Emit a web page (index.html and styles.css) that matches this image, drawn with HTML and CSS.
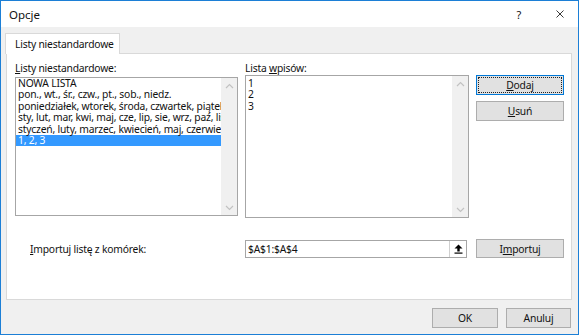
FILE: index.html
```html
<!DOCTYPE html>
<html lang="pl">
<head>
    <meta charset="UTF-8">
    <title>Opcje</title>
    <link rel="stylesheet" href="styles.css">
</head>
<body>
    <div class="window">
        <div class="titlebar">
            <span class="title">Opcje</span>
            <span class="help">?</span>
            <svg class="close" width="8" height="8" viewBox="0 0 8 8">
                <path d="M0.5 0.5 L7.5 7.5 M7.5 0.5 L0.5 7.5" stroke="#222" stroke-width="0.9" fill="none"/>
            </svg>
        </div>

        <div class="content">
            <div class="tabs">
                <div class="tab">Listy niestandardowe</div>
            </div>

            <div class="panel">
                <div class="lists">
                    <div class="col-left">
                        <div class="label"><u>L</u>isty niestandardowe:</div>
                        <div class="listbox listbox-left">
                            <div class="items">
                                <div class="item">NOWA LISTA</div>
                                <div class="item">pon., wt., śr., czw., pt., sob., niedz.</div>
                                <div class="item">poniedziałek, wtorek, środa, czwartek, piątek, sobota, niedziela</div>
                                <div class="item">sty, lut, mar, kwi, maj, cze, lip, sie, wrz, paź, lis, gru</div>
                                <div class="item">styczeń, luty, marzec, kwiecień, maj, czerwiec, lipiec</div>
                                <div class="item selected">1, 2, 3</div>
                            </div>
                            <div class="scrollbar">
                                <svg width="9" height="6" viewBox="0 0 9 6"><path d="M1 5 L4.5 1.5 L8 5" stroke="#c2c2c2" stroke-width="1.2" fill="none"/></svg>
                                <svg width="9" height="6" viewBox="0 0 9 6"><path d="M1 1 L4.5 4.5 L8 1" stroke="#c2c2c2" stroke-width="1.2" fill="none"/></svg>
                            </div>
                        </div>
                    </div>

                    <div class="col-right">
                        <div class="label">Lista <u>w</u>pisów:</div>
                        <div class="listbox listbox-right">
                            <div class="items">
                                <div class="item">1</div>
                                <div class="item">2</div>
                                <div class="item">3</div>
                            </div>
                            <div class="scrollbar">
                                <svg width="9" height="6" viewBox="0 0 9 6"><path d="M1 5 L4.5 1.5 L8 5" stroke="#c2c2c2" stroke-width="1.2" fill="none"/></svg>
                                <svg width="9" height="6" viewBox="0 0 9 6"><path d="M1 1 L4.5 4.5 L8 1" stroke="#c2c2c2" stroke-width="1.2" fill="none"/></svg>
                            </div>
                        </div>
                    </div>

                    <div class="buttons">
                        <div class="btn btn-default"><span class="focus"><u>D</u>odaj</span></div>
                        <div class="btn"><u>U</u>suń</div>
                    </div>
                </div>

                <div class="import-row">
                    <div class="import-label"><u>I</u>mportuj listę z komórek:</div>
                    <div class="ref-input">
                        <span class="ref-text">$A$1:$A$4</span>
                        <span class="ref-btn">
                            <svg width="9" height="10" viewBox="0 0 9 10">
                                <path d="M4.5 0.5 L8.5 4.5 L5.7 4.5 L5.7 7.5 L3.3 7.5 L3.3 4.5 L0.5 4.5 Z" fill="#000"/>
                                <rect x="0.5" y="8.5" width="8" height="1.2" fill="#000"/>
                            </svg>
                        </span>
                    </div>
                    <div class="btn btn-import">I<u>m</u>portuj</div>
                </div>
            </div>

            <div class="footer">
                <div class="btn btn-ok">OK</div>
                <div class="btn btn-cancel">Anuluj</div>
            </div>
        </div>
    </div>
</body>
</html>
```

FILE: styles.css
```css
/* Базовые стили */
* {
    margin: 0;
    padding: 0;
    box-sizing: border-box;
}

body {
    background: #ffffff;
    font-family: 'Noto Sans', 'Open Sans', sans-serif;
    font-size: 10.3px;
    letter-spacing: -0.2px;
    color: #111;
}

u {
    text-decoration: underline;
    text-underline-offset: 1px;
}

/* Окно диалога */
.window {
    width: 579px;
    height: 335px;
    border: 1px solid #1c7fd6;
    background: #f0f0f0;
    display: flex;
    flex-direction: column;
}

.titlebar {
    height: 26px;
    background: #fff;
    display: flex;
    align-items: center;
    padding-left: 8px;
}

.title {
    font-size: 11.5px;
    letter-spacing: 0;
    flex: 1;
}

.help {
    font-size: 11px;
    margin-right: 35px;
}

.close {
    margin-right: 14px;
}

.content {
    flex: 1;
    display: flex;
    flex-direction: column;
}

/* Вкладки */
.tabs {
    padding: 6px 0 0 4px;
    display: flex;
}

.tab {
    height: 21px;
    width: 115px;
    margin-bottom: -1px;
    background: #fff;
    border: 1px solid #d9d9d9;
    border-bottom: none;
    padding: 3px 0 0 9px;
    position: relative;
    z-index: 1;
    line-height: 14px;
}

.panel {
    margin-left: 5px;
    width: 566px;
    height: 247px;
    background: #fff;
    border: 1px solid #d9d9d9;
    padding: 7px 0 0 8px;
}

/* Списки */
.lists {
    display: flex;
    align-items: flex-start;
}

.label {
    height: 14px;
    line-height: 14px;
}

.col-left {
    width: 223px;
}

.col-right {
    width: 224px;
    margin-left: 7px;
}

.listbox {
    border: 1px solid #a6a6a6;
    display: flex;
    background: #fff;
}

.listbox-left {
    margin-top: 2px;
    height: 139px;
}

.listbox-right {
    height: 143px;
}

.items {
    flex: 1;
    overflow: hidden;
    line-height: 11.4px;
}

.listbox-right .items {
    padding-top: 2px;
}

.item {
    white-space: nowrap;
    padding-left: 2px;
}

.item.selected {
    background: #3399ff;
    color: #fff;
}

.scrollbar {
    width: 16px;
    background: #f0f0f0;
    display: flex;
    flex-direction: column;
    justify-content: space-between;
    align-items: center;
    padding: 5px 0 4px;
}

/* Кнопки */
.buttons {
    margin-left: 7px;
    padding-top: 14px;
    display: flex;
    flex-direction: column;
    gap: 6px;
}

.btn {
    width: 88px;
    height: 20px;
    background: #e1e1e1;
    border: 1px solid #adadad;
    display: flex;
    align-items: center;
    justify-content: center;
    line-height: 12px;
}

.btn-default {
    border-color: #0078d7;
    padding: 1px;
}

.btn-default .focus {
    width: 100%;
    height: 100%;
    border: 1px dotted #222;
    display: flex;
    align-items: center;
    justify-content: center;
}

/* Импорт */
.import-row {
    display: flex;
    align-items: center;
    margin-top: 21px;
}

.import-label {
    width: 230px;
    padding-left: 15px;
}

.ref-input {
    width: 222px;
    height: 18px;
    border: 1px solid #a6a6a6;
    display: flex;
    align-items: center;
}

.ref-text {
    flex: 1;
    padding-left: 2px;
}

.ref-btn {
    width: 17px;
    height: 100%;
    border-left: 1px solid #d0d0d0;
    display: flex;
    align-items: center;
    justify-content: center;
}

.btn-import {
    margin-left: 9px;
    height: 19px;
}

/* Нижняя панель */
.footer {
    display: flex;
    justify-content: flex-end;
    gap: 8px;
    padding: 8px 7px 0 0;
}

.btn-ok {
    width: 66px;
}

.btn-cancel {
    width: 65px;
}
```
